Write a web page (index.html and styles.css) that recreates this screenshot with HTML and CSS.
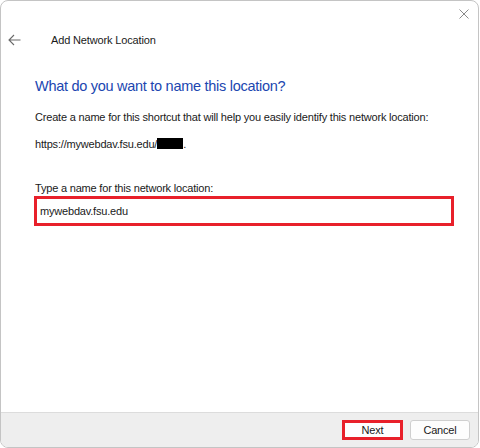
FILE: index.html
```html
<!DOCTYPE html>
<html>
<head>
<meta charset="utf-8">
<link rel="stylesheet" href="styles.css">
</head>
<body>
<div class="window">
  <div class="titlebar">
    <svg class="close" width="10" height="10" viewBox="0 0 10 10"><path d="M0.5 0.5 L9.5 9.5 M9.5 0.5 L0.5 9.5" stroke="#8a8a8a" stroke-width="1" fill="none"/></svg>
  </div>
  <div class="header">
    <svg class="back" width="13" height="12" viewBox="0 0 13 12"><path d="M12.5 6 H1 M6 1 L1 6 L6 11" stroke="#6a6a6a" stroke-width="1.1" fill="none"/></svg>
    <span class="title">Add Network Location</span>
  </div>
  <div class="content">
    <h1 class="heading">What do you want to name this location?</h1>
    <p class="text">Create a name for this shortcut that will help you easily identify this network location:</p>
    <p class="text url">https://mywebdav.fsu.edu/<span class="redact"></span>.</p>
    <p class="text label">Type a name for this network location:</p>
    <div class="input">mywebdav.fsu.edu</div>
  </div>
  <div class="footer">
    <button class="btn btn-next">Next</button>
    <button class="btn">Cancel</button>
  </div>
</div>
</body>
</html>
```
FILE: styles.css
```css
html, body {
  margin: 0;
  padding: 0;
  background: #ffffff;
}
body {
  font-family: "Liberation Sans", Arial, sans-serif;
  font-size: 11px;
  letter-spacing: -0.19px;
  color: #1a1a1a;
}
.window {
  box-sizing: border-box;
  width: 479px;
  height: 448px;
  border: 1px solid #c4c4c4;
  border-radius: 8px;
  background: #ffffff;
  display: flex;
  flex-direction: column;
  overflow: hidden;
}
.titlebar {
  height: 27px;
  display: flex;
  justify-content: flex-end;
  align-items: flex-start;
}
.close {
  margin-top: 8px;
  margin-right: 9px;
}
.header {
  height: 24px;
  display: flex;
  align-items: center;
}
.back {
  margin-left: 7px;
}
.title {
  margin-left: 30px;
  font-size: 11px;
  letter-spacing: -0.15px;
  color: #1a1a1a;
}
.content {
  padding: 0 25px 0 34px;
}
.heading {
  margin: 24px 0 0 0;
  font-size: 14.5px;
  letter-spacing: -0.28px;
  line-height: 20px;
  font-weight: normal;
  color: #2046b0;
}
.text {
  margin: 13px 0 0 0;
  line-height: 16px;
  font-size: 11px;
}
.url {
  margin-top: 11px;
}
.redact {
  display: inline-block;
  width: 26px;
  height: 11px;
  background: #000;
  vertical-align: -1px;
}
.label {
  margin-top: 28px;
}
.input {
  box-sizing: border-box;
  width: 420px;
  height: 30px;
  margin-left: -1px;
  border: 3px solid #e8202a;
  padding: 0 0 0 3px;
  line-height: 24px;
  font-size: 11px;
}
.footer {
  margin-top: auto;
  height: 35px;
  box-sizing: border-box;
  border-top: 1px solid #dcdcdc;
  background: #eeeeee;
  display: flex;
  justify-content: flex-end;
  align-items: flex-start;
  padding: 7px 8px 0 0;
  gap: 7px;
}
.btn {
  box-sizing: border-box;
  width: 60px;
  height: 20px;
  border: 1px solid #cfcfcf;
  border-radius: 3px;
  background: #fdfdfd;
  font-family: inherit;
  font-size: 11px;
  letter-spacing: inherit;
  color: #1a1a1a;
  padding: 0;
}
.btn-next {
  width: 61px;
  border: 3px solid #e8202a;
  border-radius: 0;
  background: #fefefe;
}
```
